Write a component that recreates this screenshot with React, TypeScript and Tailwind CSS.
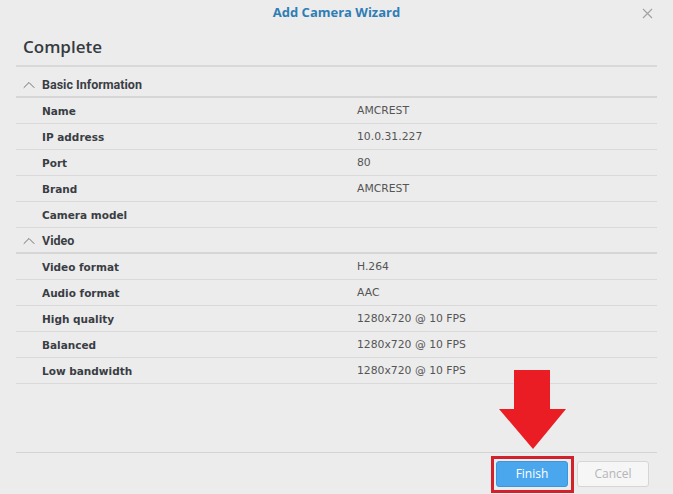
import { ChevronUp } from "lucide-react";

type Row = { label: string; value?: string; section?: boolean };

const rows: Row[] = [
  { label: "Basic Information", section: true },
  { label: "Name", value: "AMCREST" },
  { label: "IP address", value: "10.0.31.227" },
  { label: "Port", value: "80" },
  { label: "Brand", value: "AMCREST" },
  { label: "Camera model", value: "" },
  { label: "Video", section: true },
  { label: "Video format", value: "H.264" },
  { label: "Audio format", value: "AAC" },
  { label: "High quality", value: "1280x720 @ 10 FPS" },
  { label: "Balanced", value: "1280x720 @ 10 FPS" },
  { label: "Low bandwidth", value: "1280x720 @ 10 FPS" },
];

const App = () => {
  return (
    <div className="relative w-[673px] h-[494px] bg-[#ececec] flex flex-col overflow-hidden">
      {/* header */}
      <div className="relative h-[26px] flex items-center justify-center">
        <span className="font-['Open_Sans',sans-serif] font-bold text-[13px] text-[#2f7db5]">
          Add Camera Wizard
        </span>
        <svg
          className="absolute left-[642px] top-[8px]"
          width="11"
          height="11"
          viewBox="0 0 11 11"
          fill="none"
          stroke="#a3a3a3"
          strokeWidth="1.2"
        >
          <path d="M1 1 L10 10 M10 1 L1 10" />
        </svg>
      </div>

      <div className="mx-4 flex-1 flex flex-col">
        <div className="h-[41px] border-b-2 border-[#d9d9d9] flex items-center pl-[7px] pt-[2px]">
          <h1 className="font-['Open_Sans',sans-serif] font-semibold text-[17px] text-[#363b42]">
            Complete
          </h1>
        </div>

        <div className="pt-[5px]">
          {rows.map((r) =>
            r.section ? (
              <div
                key={r.label}
                className="h-[26px] border-b-2 border-[#d6d6d6] flex items-center pt-[2px]"
              >
                <ChevronUp className="ml-[3px] w-[20px] h-[20px] text-[#666]" strokeWidth={1.1} />
                <span className="ml-[3px] font-['Roboto',sans-serif] font-bold text-[12.5px] text-[#3a3e44]">
                  {r.label}
                </span>
              </div>
            ) : (
              <div
                key={r.label}
                className="h-[26px] border-b border-[#d9d9d9] flex items-center pt-[2px]"
              >
                <span className="w-[315px] pl-[26px] font-['DejaVu_Sans',sans-serif] font-bold text-[10.5px] text-[#3a3e44]">
                  {r.label}
                </span>
                <span className="pl-[26px] font-['DejaVu_Sans',sans-serif] text-[10.8px] text-[#555]">
                  {r.value}
                </span>
              </div>
            )
          )}
        </div>
      </div>

      {/* footer */}
      <div className="mx-4 border-t border-[#d4d4d4] h-[42px] flex justify-end pt-[8px] pr-[8px] gap-[9px]">
        <button className="w-[72px] h-[26px] rounded-[3px] bg-[#4aa7ee] border border-[#3d96dc] text-white font-['Open_Sans',sans-serif] text-[12px]">
          Finish
        </button>
        <button className="w-[72px] h-[26px] rounded-[3px] bg-[#f6f6f6] border border-[#d6d6d6] text-[#b5b5b5] font-['Open_Sans',sans-serif] text-[12px]">
          Cancel
        </button>
      </div>

      {/* annotation: red arrow and highlight */}
      <svg
        className="absolute left-[497px] top-[370px]"
        width="71"
        height="80"
        viewBox="0 0 71 80"
      >
        <polygon points="17,0 53,0 53,39 69,39 36,79 2,39 17,39" fill="#ea1c24" />
      </svg>
      <div className="absolute left-[491px] top-[456px] w-[83px] h-[37px] border-[3px] border-[#d3212b]" />
    </div>
  );
};

export default App;
